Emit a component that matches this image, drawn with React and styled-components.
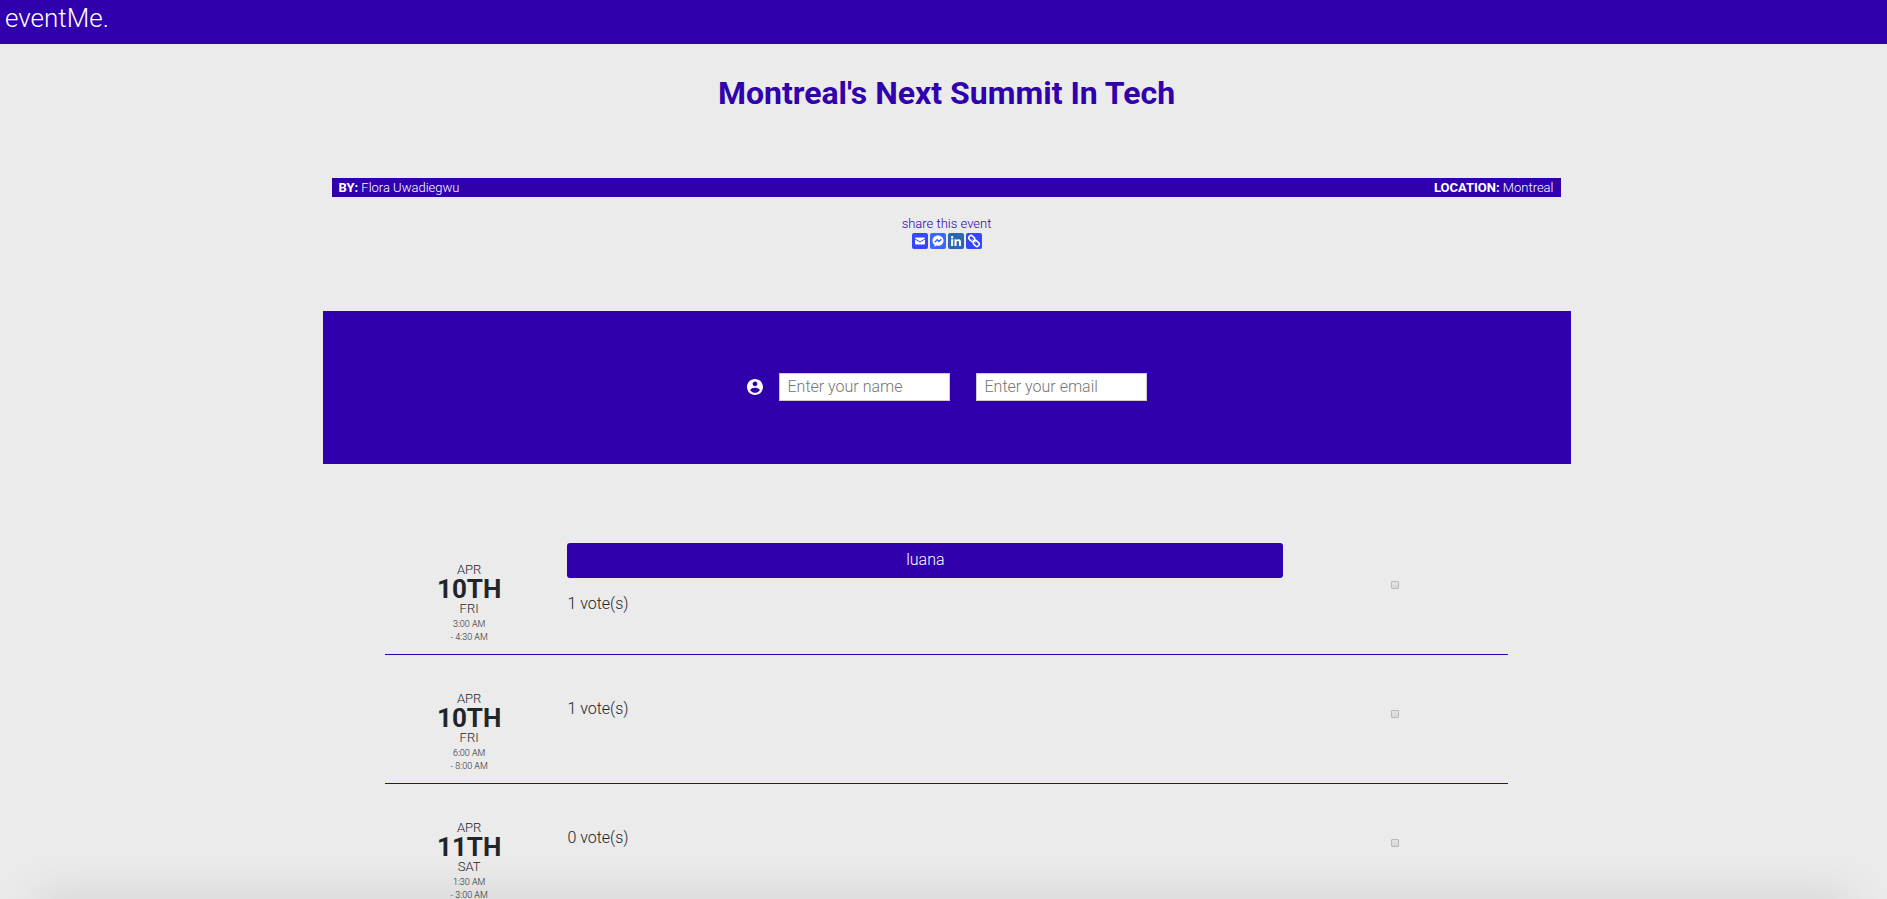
import React from "react";
import styled, { createGlobalStyle } from "styled-components";

const violet = "#3100ad";

const GlobalStyle = createGlobalStyle`
  * { box-sizing: border-box; }
  body {
    margin: 0;
    background: #ebebeb;
    color: #212529;
    font-family: Roboto, "Liberation Sans", sans-serif;
    font-size: 16px;
    font-weight: 300;
    line-height: 24px;
    overflow-x: hidden;
  }
`;

const Header = styled.header`
  height: 44px;
  padding: 0 5px;
  background: ${violet};
`;

const Brand = styled.a`
  color: #fff;
  font-size: 26px;
  line-height: 36px;
  text-decoration: none;
`;

const Main = styled.main`
  padding-left: 6px;
`;

const Container = styled.div`
  width: 90%;
  max-width: 1248px;
  margin: 0 auto;
`;

const Title = styled.h1`
  margin: 0;
  padding: 29px 0 65px;
  color: ${violet};
  font-size: 32px;
  font-weight: 700;
  line-height: 40px;
  text-align: center;
`;

const InfoBar = styled.div`
  display: flex;
  justify-content: space-between;
  margin: 0 10px 0 9px;
  padding: 0 7px;
  background: ${violet};
  color: #fff;
  font-size: 13px;
  line-height: 19px;

  strong { font-weight: 700; }
`;

const Share = styled.section`
  display: flex;
  flex-direction: column;
  align-items: center;
  padding: 18px 0 62px;
  color: ${violet};
  font-size: 13px;
  line-height: 18px;
`;

const ShareButtons = styled.div`
  display: flex;
  gap: 2px;
`;

const ShareButton = styled.button`
  width: 16px;
  height: 16px;
  padding: 0;
  border: 0;
  border-radius: 2px;
  background: ${(p) => p.$color};
  cursor: pointer;

  svg { display: block; width: 16px; height: 16px; }
`;

const VoterPanel = styled.form`
  display: flex;
  align-items: center;
  justify-content: center;
  gap: 26px;
  padding: 62px 0 63px;
  background: ${violet};
`;

const NameField = styled.div`
  display: flex;
  align-items: center;
  gap: 16px;
`;

const TextInput = styled.input`
  width: 171px;
  height: 28px;
  padding: 0 8px 2px;
  border: 1px solid #ccc;
  border-radius: 0;
  background: #fff;
  color: #212529;
  font: inherit;

  &::placeholder { color: #757575; opacity: 1; }
`;

const Options = styled.ul`
  width: 90%;
  margin: 62px auto 0;
  padding: 0;
  list-style: none;
`;

const Option = styled.li`
  display: grid;
  grid-template-columns: 15% 65% 20%;
  align-items: center;
  height: 129px;
  border-bottom: 1px solid ${violet};
`;

const DateBlock = styled.div`
  padding: 34px 0 11px;
  font-size: 13px;
  line-height: 19px;
  text-align: center;
  text-transform: uppercase;
`;

const Day = styled.div`
  font-size: 26px;
  font-weight: 700;
  line-height: 20px;
`;

const Time = styled.div`
  font-size: 9px;
  line-height: 13px;
`;

const Votes = styled.div`
  padding-left: 14px;
`;

const Voter = styled.div`
  margin-bottom: 14px;
  padding-bottom: 2px;
  border-radius: 3px;
  background: ${violet};
  color: #fff;
  line-height: 33px;
  text-align: center;
`;

const Count = styled.p`
  margin: 0 0 22px;
`;

const Tick = styled.input`
  appearance: none;
  justify-self: center;
  width: 8px;
  height: 8px;
  margin: 0 2px 12px 0;
  border: 1px solid #b8b8b8;
  border-radius: 1px;
  background: linear-gradient(#e4e4e4, #d6d6d6);

  &:checked { background: ${violet}; }
`;

const BottomShade = styled.div`
  position: fixed;
  right: 36px;
  bottom: -20px;
  left: 36px;
  height: 16px;
  box-shadow: 0 0 48px rgba(0, 0, 0, 0.22);
  pointer-events: none;
`;

const shares = [
  {
    label: "Email", color: "#3546ff",
    icon: (
      <>
        <rect x="6" y="9" width="20" height="14" rx="2" fill="#fff" />
        <path d="M6 12l10 6 10-6" fill="none" stroke="#3546ff" strokeWidth="2" />
      </>
    ),
  },
  {
    label: "Messenger", color: "#3b66ff",
    icon: (
      <>
        <path fill="#fff" d="M16 5C9.900 5 5 9.600 5 15.300c0 3.200 1.600 6.100 4.100 8v4l3.800-2.100c1 .3 2 .4 3.100.4 6.100 0 11-4.600 11-10.300S22.100 5 16 5z" />
        <path d="M9.500 18.500l5-5 3.500 3.500 5-4.500" fill="none" stroke="#3b66ff" strokeWidth="3" />
      </>
    ),
  },
  {
    label: "LinkedIn", color: "#2867b2",
    icon: <path fill="#fff" d="M6.200 12.600h4.200v13.500H6.200V12.600zm2.100-6.700a2.400 2.400 0 1 1 0 4.900 2.400 2.400 0 0 1 0-4.900m4.700 6.700h4v1.900h.1c.6-1.100 1.900-2.200 4-2.200 4.200 0 5 2.800 5 6.400v7.400h-4.200v-6.600c0-1.600 0-3.600-2.200-3.600s-2.500 1.700-2.500 3.500v6.700H13V12.600z" />,
  },
  {
    label: "Copy link", color: "#3546ff",
    icon: (
      <g fill="none" stroke="#fff" strokeWidth="3">
        <rect x="5" y="6.500" width="13" height="9" rx="4.500" transform="rotate(45 11.500 11)" />
        <rect x="14" y="16.500" width="13" height="9" rx="4.500" transform="rotate(45 20.500 21)" />
        <path d="M13 13l6 6" strokeWidth="2" />
      </g>
    ),
  },
];

const options = [
  { day: "10th", weekday: "Fri", start: "3:00 AM", end: "4:30 AM", voter: "luana", votes: 1 },
  { day: "10th", weekday: "Fri", start: "6:00 AM", end: "8:00 AM", votes: 1 },
  { day: "11th", weekday: "Sat", start: "1:30 AM", end: "3:00 AM", votes: 0 },
];

export default function App() {
  return (
    <>
      <GlobalStyle />
      <Header><Brand href="#">eventMe.</Brand></Header>
      <Main>
        <Container>
          <Title>Montreal's Next Summit In Tech</Title>
          <InfoBar>
            <span><strong>BY:</strong> Flora Uwadiegwu</span>
            <span><strong>LOCATION:</strong> Montreal</span>
          </InfoBar>
          <Share>
            share this event
            <ShareButtons>
              {shares.map((s) => (
                <ShareButton key={s.label} type="button" aria-label={s.label} $color={s.color}>
                  <svg viewBox="0 0 32 32">{s.icon}</svg>
                </ShareButton>
              ))}
            </ShareButtons>
          </Share>
          <VoterPanel>
            <NameField>
              <svg width="16" height="16" viewBox="2 2 20 20" aria-hidden="true">
                <path fill="#fff" d="M12 2C6.480 2 2 6.480 2 12s4.480 10 10 10 10-4.480 10-10S17.520 2 12 2zm0 3c1.660 0 3 1.340 3 3s-1.340 3-3 3-3-1.340-3-3 1.340-3 3-3zm0 14.200c-2.500 0-4.710-1.280-6-3.220.030-1.990 4-3.080 6-3.080 1.990 0 5.970 1.090 6 3.080-1.290 1.940-3.500 3.220-6 3.220z" />
              </svg>
              <TextInput type="text" aria-label="Name" placeholder="Enter your name" />
            </NameField>
            <TextInput type="email" aria-label="Email" placeholder="Enter your email" />
          </VoterPanel>
          <Options>
            {options.map((o) => (
              <Option key={o.day + o.start}>
                <DateBlock>
                  <div>Apr</div>
                  <Day>{o.day}</Day>
                  <div>{o.weekday}</div>
                  <Time>{o.start}</Time>
                  <Time>- {o.end}</Time>
                </DateBlock>
                <Votes>
                  {o.voter && <Voter>{o.voter}</Voter>}
                  <Count>{o.votes} vote(s)</Count>
                </Votes>
                <Tick type="checkbox" aria-label={`${o.weekday} ${o.day}, ${o.start} - ${o.end}`} />
              </Option>
            ))}
          </Options>
        </Container>
      </Main>
      <BottomShade />
    </>
  );
}
